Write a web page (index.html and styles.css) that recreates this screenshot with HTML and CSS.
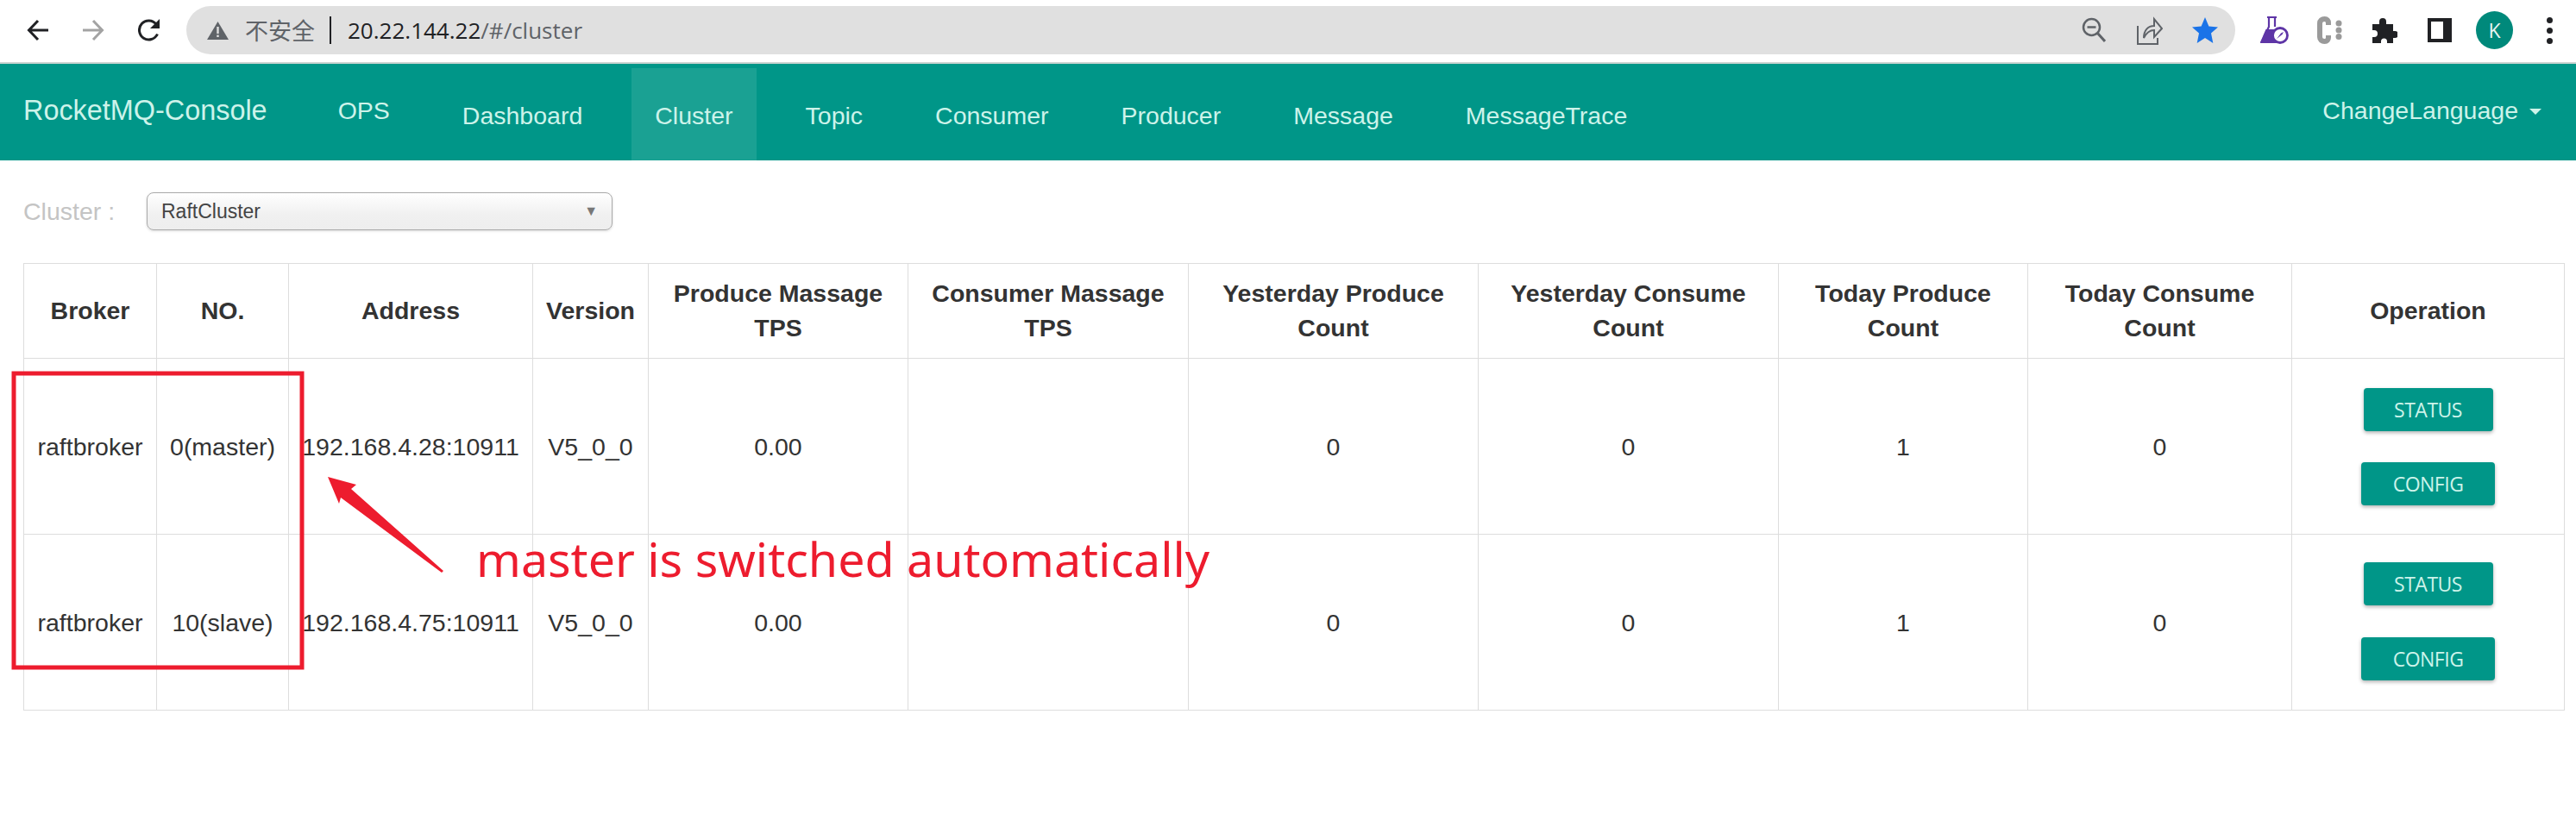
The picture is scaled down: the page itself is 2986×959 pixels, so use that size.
FILE: index.html
```html
<!DOCTYPE html>
<html lang="en">
<head>
<meta charset="utf-8">
<title>RocketMQ-Console</title>
<link rel="stylesheet" href="styles.css">
</head>
<body>
<header class="browser">
  <svg class="tool" viewBox="0 0 26 26"><path d="M25 13H3M13 2 2.500 13 13 24" fill="none" stroke="#202124" stroke-width="3"/></svg>
  <svg class="tool fwd" viewBox="0 0 26 26"><path d="M1 13h22M13 2l10.500 11L13 24" fill="none" stroke="#a3a3a3" stroke-width="3"/></svg>
  <svg class="tool rel" viewBox="0 0 26 26"><path d="M22.500 17.500A11 11 0 1 1 21 6" fill="none" stroke="#202124" stroke-width="3"/><path d="M25 0v11H14z" fill="#202124"/></svg>
  <div class="omnibox">
    <svg class="warn" viewBox="0 0 25 21"><path d="M12.500 0 25 21H0z" fill="#5f6368"/><path d="M11.300 6h2.400v8h-2.400zM11.300 15.500h2.400V18h-2.400z" fill="#e0e0e0"/></svg>
    <span class="insecure">不安全</span>
    <span class="divider"></span>
    <span class="url">20.22.144.22<span class="path">/#/cluster</span></span>
    <svg class="omni-icon glass" viewBox="0 0 28 30"><circle cx="11.500" cy="11.500" r="9.500" fill="none" stroke="#5f6368" stroke-width="2.500"/><path d="M6.500 11.500h10" stroke="#5f6368" stroke-width="2.500"/><path d="m18 18 9 10" stroke="#5f6368" stroke-width="3"/></svg>
    <svg class="omni-icon share" viewBox="0 0 30 36"><path d="M1 13v21h23v-7" fill="none" stroke="#5f6368" stroke-width="2"/><path d="M8 27c0-9 5-14 12-14V5l9 11-9 10v-8c-5 0-9 3-12 9z" fill="none" stroke="#5f6368" stroke-width="2"/></svg>
    <svg class="omni-icon star" viewBox="0 0 30 30"><path d="m15 0 4.400 10.400L30 11.400l-8 7.100L24.300 30 15 24l-9.300 6L8 18.500l-8-7.100 10.600-1z" fill="#1a73e8"/></svg>
  </div>
  <svg class="ext flask" viewBox="0 0 33 32"><path d="M8 1h11M10 1v11L1.500 30H20M17 1v11" fill="none" stroke="#5e35a6" stroke-width="2.200"/><path d="M6.500 15H17l6 15H0z" fill="#5e35a6"/><circle cx="23" cy="22" r="8.500" fill="#fff" stroke="#5e35a6" stroke-width="2.800"/><path d="m19 26 5-6.500 3-1.500-1.500 3z" fill="#5e35a6"/></svg>
  <svg class="ext cee" viewBox="0 0 29 32"><path d="M13 10V7.500C13 5 11.500 3 8.500 3S3 5 3 8v16c0 3 2.500 5 5.500 5s4.500-2 4.500-4.500V22" fill="none" stroke="#9a9a9a" stroke-width="6"/><circle cx="25" cy="8" r="3.500" fill="#9a9a9a"/><circle cx="25" cy="16" r="3.500" fill="#9a9a9a"/><circle cx="25" cy="23.500" r="3.500" fill="#9a9a9a"/></svg>
  <svg class="ext puzzle" viewBox="0 0 29 29"><path d="M0 7h8V4a4 4 0 0 1 8 0v3h8v8h2a4 4 0 0 1 0 8h-2v6h-7v-2a3.500 3.500 0 0 0-7 0v2H0v-7h2a4 4 0 0 0 0-8H0z" fill="#202124"/></svg>
  <svg class="ext panel" viewBox="0 0 28 28"><path d="M0 0h28v28H0zM4 4v20h14V4z" fill="#202124" fill-rule="evenodd"/></svg>
  <div class="avatar">K</div>
  <svg class="ext dots" viewBox="0 0 7 31"><circle cx="3.500" cy="3.500" r="3.500" fill="#202124"/><circle cx="3.500" cy="15.500" r="3.500" fill="#202124"/><circle cx="3.500" cy="27.500" r="3.500" fill="#202124"/></svg>
</header>

<nav class="navbar">
  <a class="brand">RocketMQ-Console</a>
  <a class="nav-item raised">OPS</a>
  <a class="nav-item">Dashboard</a>
  <a class="nav-item active">Cluster</a>
  <a class="nav-item">Topic</a>
  <a class="nav-item">Consumer</a>
  <a class="nav-item">Producer</a>
  <a class="nav-item">Message</a>
  <a class="nav-item">MessageTrace</a>
  <a class="language">ChangeLanguage<span class="caret"></span></a>
</nav>

<main class="content">
  <div class="filter">
    <label class="filter-label">Cluster :</label>
    <div class="select"><span>RaftCluster</span><span class="select-arrow">▼</span></div>
  </div>
  <table class="cluster">
    <colgroup>
      <col class="c1"><col class="c2"><col class="c3"><col class="c4"><col class="c5"><col class="c6"><col class="c7"><col class="c8"><col class="c9"><col class="c10"><col class="c11">
    </colgroup>
    <thead>
      <tr>
        <th>Broker</th><th>NO.</th><th>Address</th><th>Version</th>
        <th>Produce Massage<br>TPS</th><th>Consumer Massage<br>TPS</th>
        <th>Yesterday Produce<br>Count</th><th>Yesterday Consume<br>Count</th>
        <th>Today Produce<br>Count</th><th>Today Consume<br>Count</th><th>Operation</th>
      </tr>
    </thead>
    <tbody>
      <tr>
        <td>raftbroker</td><td>0(master)</td><td>192.168.4.28:10911</td><td>V5_0_0</td><td>0.00</td><td></td><td>0</td><td>0</td><td>1</td><td>0</td>
        <td><div class="ops"><button class="btn status">STATUS</button><button class="btn config">CONFIG</button></div></td>
      </tr>
      <tr>
        <td>raftbroker</td><td>10(slave)</td><td>192.168.4.75:10911</td><td>V5_0_0</td><td>0.00</td><td></td><td>0</td><td>0</td><td>1</td><td>0</td>
        <td><div class="ops wide"><button class="btn status">STATUS</button><button class="btn config">CONFIG</button></div></td>
      </tr>
    </tbody>
  </table>
</main>

<svg class="markup" viewBox="0 0 2986 959"><rect x="16" y="433" width="334" height="341" fill="none" stroke="#ed1c2e" stroke-width="5"/><path d="M380 553 413 562 407 567 514 662 512 664 395 577 393 584z" fill="#ed1c2e"/></svg>
<div class="note">master is switched automatically</div>
</body>
</html>
```
FILE: styles.css
```css
* { box-sizing: border-box; }
html, body { margin: 0; padding: 0; }
body {
  width: 2986px;
  height: 959px;
  overflow: hidden;
  position: relative;
  background: #fff;
  font-family: "Liberation Sans", Arial, sans-serif;
  font-size: 28.500px;
  line-height: 40px;
  color: #333;
}

/* Browser chrome */
.browser {
  display: flex;
  align-items: center;
  height: 74px;
  padding: 0 0 2px 31px;
  background: #fff;
  border-bottom: 2px solid #ccd4d2;
}
.tool { width: 26px; height: 26px; flex: none; }
.fwd { margin-left: 38px; }
.rel { margin-left: 39px; }
.omnibox {
  display: flex;
  align-items: center;
  flex: 0 0 2375px;
  height: 56px;
  margin-left: 30px;
  padding: 0 20px 0 24px;
  border-radius: 28px;
  background: #e0e0e0;
  font-family: "Open Sans", "Noto Sans CJK SC", sans-serif;
  font-size: 26px;
  color: #202124;
}
.warn { width: 25px; height: 21px; flex: none; }
.insecure {
  margin-left: 19px;
  width: 83px;
  font-family: "Noto Sans CJK SC", sans-serif;
  font-size: 27px;
  color: #5f6368;
  white-space: nowrap;
}
.divider { width: 2px; height: 32px; margin: 0 19px 0 15px; background: #202124; }
.url { white-space: nowrap; }
.path { color: #5f6368; }
.omni-icon { flex: none; }
.glass { width: 28px; height: 30px; margin-left: auto; }
.share { width: 30px; height: 36px; margin-left: 36px; }
.star { width: 30px; height: 30px; margin-left: 34px; }
.ext { flex: none; }
.flask { width: 33px; height: 32px; margin-left: 29px; }
.cee { width: 29px; height: 32px; margin-left: 33px; }
.puzzle { width: 29px; height: 29px; margin-left: 35px; }
.panel { width: 28px; height: 28px; margin-left: 35px; }
.avatar {
  flex: none;
  width: 43px;
  height: 44px;
  margin-left: 28px;
  border-radius: 50%;
  background: #00897b;
  color: #e8f5f2;
  font-family: "Open Sans", sans-serif;
  font-size: 23px;
  line-height: 44px;
  text-align: center;
}
.dots { width: 7px; height: 31px; margin-left: 39px; }

/* App nav */
.navbar {
  display: flex;
  align-items: stretch;
  gap: 30px;
  height: 112px;
  padding: 5px 40px 0 27px;
  background: #009688;
  color: #cdf3ea;
}
.brand { align-self: center; margin: -10px 25px 0 0; white-space: nowrap; font-size: 32.400px; }
.nav-item { display: flex; align-items: center; padding: 2px 27px 0; white-space: nowrap; }
.raised { padding-top: 0; padding-bottom: 10px; }
.active { background: #1aa193; }
.language { align-self: center; margin: -10px 0 0 auto; display: flex; align-items: center; white-space: nowrap; }
.caret {
  width: 0;
  height: 0;
  margin-left: 13px;
  margin-top: 3px;
  border-top: 7px solid #cdf3ea;
  border-left: 7px solid transparent;
  border-right: 7px solid transparent;
}

/* Content */
.content { padding: 37px 14px 0 27px; }
.filter { display: flex; align-items: center; height: 44px; margin-bottom: 38px; }
.filter-label { width: 143px; color: #c4c4c4; }
.select {
  display: flex;
  align-items: center;
  justify-content: space-between;
  width: 540px;
  height: 44px;
  padding: 0 16px;
  border: 1px solid #aaa;
  border-radius: 8px;
  background: linear-gradient(#fff, #f0f0f0 60%, #eee);
  box-shadow: 0 1px 3px rgba(0, 0, 0, .15);
  font-size: 23px;
  color: #444;
}
.select-arrow { font-size: 16px; color: #777; }

.cluster {
  width: 2945px;
  table-layout: fixed;
  border-collapse: collapse;
  border: 1px solid #ddd;
}
.c1 { width: 154px; }
.c2 { width: 153px; }
.c3 { width: 283px; }
.c4 { width: 134px; }
.c5 { width: 301px; }
.c6 { width: 325px; }
.c7 { width: 336px; }
.c8 { width: 348px; }
.c9 { width: 289px; }
.c10 { width: 306px; }
.c11 { width: 316px; }
.cluster th, .cluster td {
  padding: 0;
  border: 1px solid #ddd;
  text-align: center;
  vertical-align: middle;
}
.cluster th { height: 110px; padding-bottom: 2px; font-weight: 700; }
.cluster td { height: 204px; }
.ops { display: flex; flex-direction: column; align-items: center; gap: 36px; }
.ops.wide { gap: 37px; margin-top: -3px; }
.btn {
  display: block;
  height: 50px;
  padding: 0;
  border: 0;
  border-radius: 4px;
  background: #009688;
  color: #cdf3ea;
  font-family: "Open Sans", sans-serif;
  font-size: 23px;
  letter-spacing: -0.5px;
  box-shadow: 0 2px 4px rgba(0, 0, 0, .3);
}
.status { width: 150px; }
.config { width: 155px; }

/* Screenshot annotation */
.markup { position: absolute; left: 0; top: 0; width: 2986px; height: 959px; pointer-events: none; }
.note {
  position: absolute;
  left: 552px;
  top: 608px;
  font-family: "Noto Sans", sans-serif;
  font-size: 55.500px;
  line-height: 80px;
  color: #ed1c2e;
  white-space: nowrap;
}
```
